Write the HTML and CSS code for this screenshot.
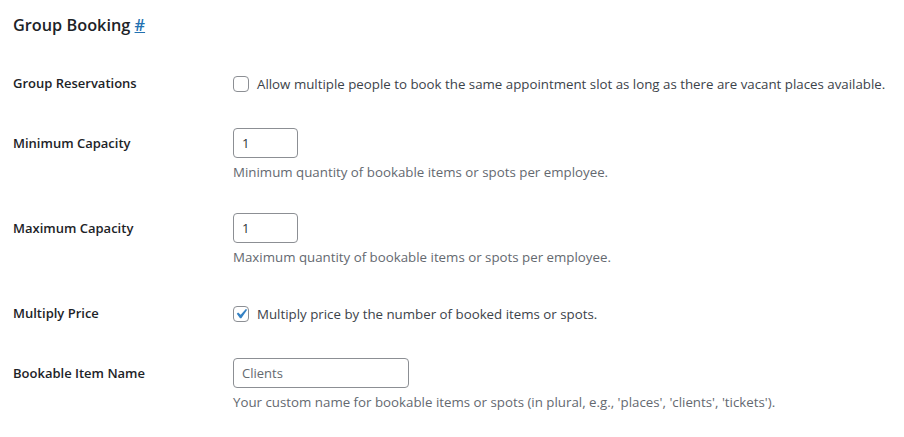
FILE: index.html
```html
<!DOCTYPE html>
<html>
<head>
<meta charset="utf-8">
<link rel="stylesheet" href="styles.css">
</head>
<body>
<div class="wrap">
  <h2 class="title">Group Booking <a href="#" class="anchor">#</a></h2>
  <div class="form">
    <div class="row">
      <div class="th">Group Reservations</div>
      <div class="td">
        <label class="check"><span class="box"></span>Allow multiple people to book the same appointment slot as long as there are vacant places available.</label>
      </div>
    </div>
    <div class="row">
      <div class="th">Minimum Capacity</div>
      <div class="td">
        <div class="input small">1</div>
        <p class="description">Minimum quantity of bookable items or spots per employee.</p>
      </div>
    </div>
    <div class="row">
      <div class="th">Maximum Capacity</div>
      <div class="td">
        <div class="input small">1</div>
        <p class="description">Maximum quantity of bookable items or spots per employee.</p>
      </div>
    </div>
    <div class="row">
      <div class="th">Multiply Price</div>
      <div class="td">
        <label class="check"><span class="box checked"><svg viewBox="0 0 20 20" width="20" height="20"><path d="M14.83 4.89l1.34.94-5.81 8.38H9.02L5.78 9.67l1.34-1.25 2.57 2.4z" fill="#3582c4"/></svg></span>Multiply price by the number of booked items or spots.</label>
      </div>
    </div>
    <div class="row">
      <div class="th">Bookable Item Name</div>
      <div class="td">
        <div class="input regular placeholder">Clients</div>
        <p class="description">Your custom name for bookable items or spots (in plural, e.g., 'places', 'clients', 'tickets').</p>
      </div>
    </div>
  </div>
</div>
</body>
</html>
```
FILE: styles.css
```css
html, body {
  margin: 0;
  padding: 0;
  background: #ffffff;
}
body {
  font-family: "Open Sans", "Noto Sans", sans-serif;
  font-size: 13px;
  color: #1d2327;
}
.wrap {
  padding: 14px 0 0 13px;
}
.title {
  margin: 0 0 18px 0;
  font-size: 16.3px;
  line-height: 22px;
  font-weight: 600;
  color: #1d2327;
}
.anchor {
  color: #2271b1;
  text-decoration: underline;
}
.row {
  display: flex;
  align-items: flex-start;
}
.th {
  width: 210px;
  flex: none;
  padding: 20px 10px 20px 0;
  box-sizing: border-box;
  font-size: 13px;
  line-height: 19px;
  font-weight: 600;
}
.td {
  padding: 14px 10px 16px 10px;
  font-size: 13.3px;
  line-height: 19px;
}
.check {
  display: flex;
  align-items: center;
  height: 30px;
  margin-top: 1px;
  margin-bottom: -1px;
  color: #3c434a;
}
.box {
  width: 16px;
  height: 16px;
  box-sizing: border-box;
  border: 1px solid #8c8f94;
  border-radius: 4px;
  margin-right: 8px;
  position: relative;
  flex: none;
}
.box svg {
  position: absolute;
  left: -3px;
  top: -3px;
}
.input {
  box-sizing: border-box;
  height: 30px;
  border: 1px solid #8c8f94;
  border-radius: 4px;
  padding: 0 8px;
  line-height: 28px;
  color: #2c3338;
  font-size: 13px;
}
.small { width: 65px; }
.regular { width: 176px; }
.placeholder { color: #646970; }
.description {
  margin: 4px 0 0 0;
  color: #646970;
  font-size: 13.3px;
  line-height: 21px;
}
```
